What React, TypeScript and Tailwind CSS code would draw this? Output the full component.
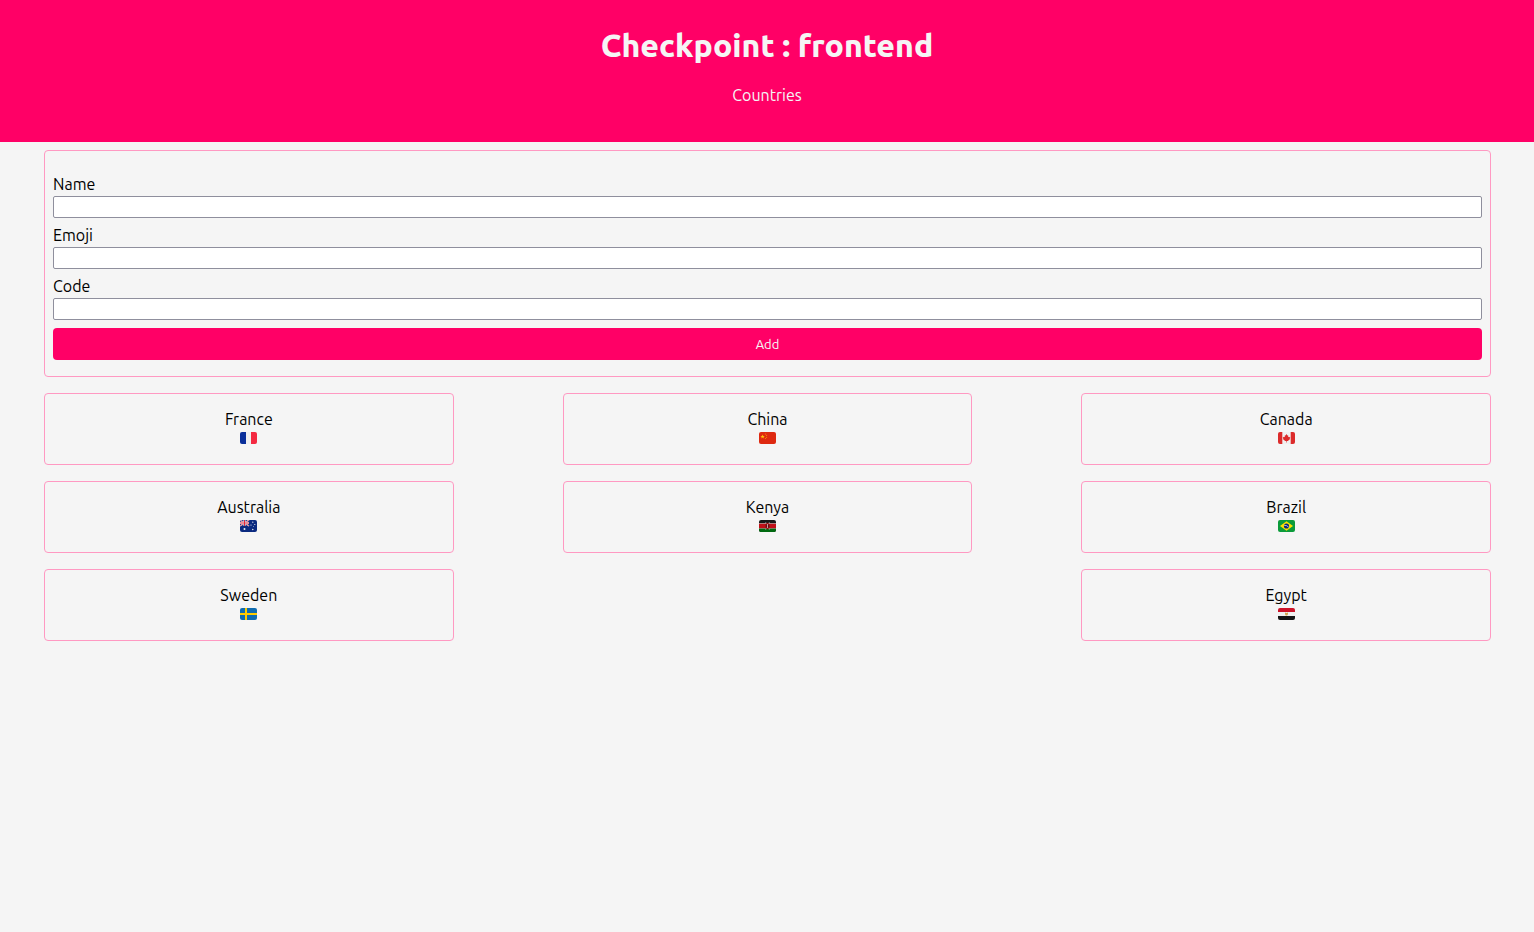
import type { ReactNode } from "react";

type Country = { name: string; code: string; flag: ReactNode; place?: string };

const countries: Country[] = [
  {
    name: "France",
    code: "FR",
    flag: (
      <>
        <rect width="17" height="12" fill="#f0f0f0" />
        <rect width="6" height="12" fill="#0a2f9a" />
        <rect x="11" width="6" height="12" fill="#f42a41" />
      </>
    ),
  },
  {
    name: "China",
    code: "CN",
    flag: (
      <>
        <rect width="17" height="12" fill="#de2910" />
        <path d="M3.6 2.4l.6 1.5h1.6l-1.3 1 .5 1.6-1.4-1-1.4 1 .5-1.6-1.3-1H3z" fill="#ffc40c" />
        <circle cx="6.4" cy="2" r=".5" fill="#ffa300" />
        <circle cx="7.6" cy="3.3" r=".5" fill="#ffa300" />
        <circle cx="7.6" cy="5.2" r=".5" fill="#ffa300" />
        <circle cx="6.4" cy="6.6" r=".5" fill="#ffa300" />
      </>
    ),
  },
  {
    name: "Canada",
    code: "CA",
    flag: (
      <>
        <rect width="17" height="12" fill="#f0f0f0" />
        <rect width="4.3" height="12" fill="#dc2b2b" />
        <rect x="12.7" width="4.3" height="12" fill="#dc2b2b" />
        <path
          d="M8.5 2l.9 1.5.8-.3-.2 2 1-.7.3.7 1-.1-.6 1.4.5.4-2 1.5.2.7-1.6-.2v1.5h-.6V8.9l-1.6.2.2-.7-2-1.5.5-.4-.6-1.4 1 .1.3-.7 1 .7-.2-2 .8.3z"
          fill="#dc2b2b"
        />
      </>
    ),
  },
  {
    name: "Australia",
    code: "AU",
    flag: (
      <>
        <rect width="17" height="12" fill="#0b2a80" />
        <path d="M0 0l9 6M9 0L0 6" stroke="#f5f5f5" strokeWidth="1.4" />
        <path d="M0 0l9 6M9 0L0 6" stroke="#e0283c" strokeWidth=".6" />
        <path d="M4.5 0v6M0 3h9" stroke="#f5f5f5" strokeWidth="2" />
        <path d="M4.5 0v6M0 3h9" stroke="#e0283c" strokeWidth="1" />
        <circle cx="4.5" cy="9" r="1" fill="#f5f5f5" />
        <circle cx="12.8" cy="2.2" r=".6" fill="#f5f5f5" />
        <circle cx="11" cy="5" r=".6" fill="#f5f5f5" />
        <circle cx="14.8" cy="4.5" r=".6" fill="#f5f5f5" />
        <circle cx="13.5" cy="6.5" r=".4" fill="#f5f5f5" />
        <circle cx="12.8" cy="9.5" r=".7" fill="#f5f5f5" />
      </>
    ),
  },
  {
    name: "Kenya",
    code: "KE",
    flag: (
      <>
        <rect width="17" height="12" fill="#181818" />
        <rect y="3.3" width="17" height="5.4" fill="#e8d8d8" />
        <rect y="3.8" width="17" height="4.4" fill="#c01018" />
        <rect y="8.7" width="17" height="3.3" fill="#006a10" />
        <path d="M6.5 2l4 8M10.5 2l-4 8" stroke="#d8c8c8" strokeWidth=".5" />
        <ellipse cx="8.5" cy="6" rx="1.7" ry="3.3" fill="#a00c14" />
        <path d="M8.5 4v4" stroke="#f5f5f5" strokeWidth=".6" />
        <path d="M7 4.5Q7.7 6 7 7.5M10 4.5Q9.3 6 10 7.5" stroke="#181818" strokeWidth=".7" fill="none" />
      </>
    ),
  },
  {
    name: "Brazil",
    code: "BR",
    flag: (
      <>
        <rect width="17" height="12" fill="#0b9b3a" />
        <path d="M8.5 1.3L15 6l-6.5 4.700L2 6z" fill="#fee000" />
        <circle cx="8.5" cy="6" r="2.6" fill="#0a2a78" />
        <path d="M6.1 5.3q2.7-.3 4.6 1.9" stroke="#f5f5f5" strokeWidth=".7" fill="none" />
      </>
    ),
  },
  {
    name: "Sweden",
    code: "SE",
    flag: (
      <>
        <rect width="17" height="12" fill="#0f6cb0" />
        <path d="M6 0v12M0 6h17" stroke="#fecb00" strokeWidth="2" />
      </>
    ),
  },
  {
    name: "Egypt",
    code: "EG",
    place: "col-start-3",
    flag: (
      <>
        <rect width="17" height="12" fill="#f0f0f0" />
        <rect width="17" height="4" fill="#cc1228" />
        <rect y="8" width="17" height="4" fill="#141414" />
        <path d="M7 4.4l1.5.5 1.5-.5v1.900l-.8 1.300H7.800L7 6.300z" fill="#d0a850" />
      </>
    ),
  },
];

const fields = ["Name", "Emoji", "Code"];

function CountryCard({ name, code, flag, place }: Country) {
  return (
    <li
      className={`flex flex-col items-center rounded border border-[#ff99c2] px-4 pt-4 pb-5 ${place ?? ""}`}
    >
      <span className="leading-[18px]">{name}</span>
      <svg
        className="mt-1 h-3 w-[17px] overflow-hidden rounded-[2px]"
        viewBox="0 0 17 12"
        role="img"
        aria-label={code}
      >
        {flag}
      </svg>
    </li>
  );
}

export default function App() {
  return (
    <div className="min-h-screen bg-[#f5f5f5] font-['Ubuntu','Noto_Sans',sans-serif] text-base text-black">
      <header className="bg-[#ff0066] pt-6 pb-9 text-center text-[#f5f5f5]">
        <h1 className="text-[32px] leading-[42px] font-extrabold">Checkpoint : frontend</h1>
        <p className="mt-[18px] leading-[22px]">Countries</p>
      </header>
      <main className="pt-2 pr-[43px] pl-11">
        <form
          className="flex flex-col gap-2 rounded border border-[#ff99c2] px-2 pt-6 pb-4"
          onSubmit={(event) => event.preventDefault()}
        >
          {fields.map((field) => (
            <div key={field} className="flex flex-col gap-[3px]">
              <label htmlFor={field} className="leading-[18px]">
                {field}
              </label>
              <input
                id={field}
                name={field}
                type="text"
                className="h-[22px] rounded-[2px] border border-[#8f8f9d] bg-white px-1 text-[13px]"
              />
            </div>
          ))}
          <button type="submit" className="h-8 rounded bg-[#ff0066] pt-px text-[13px] text-[#f5f5f5]">
            Add
          </button>
        </form>
        <ul className="mt-4 grid grid-cols-3 gap-x-[109px] gap-y-4">
          {countries.map((country) => (
            <CountryCard key={country.code} {...country} />
          ))}
        </ul>
      </main>
    </div>
  );
}
